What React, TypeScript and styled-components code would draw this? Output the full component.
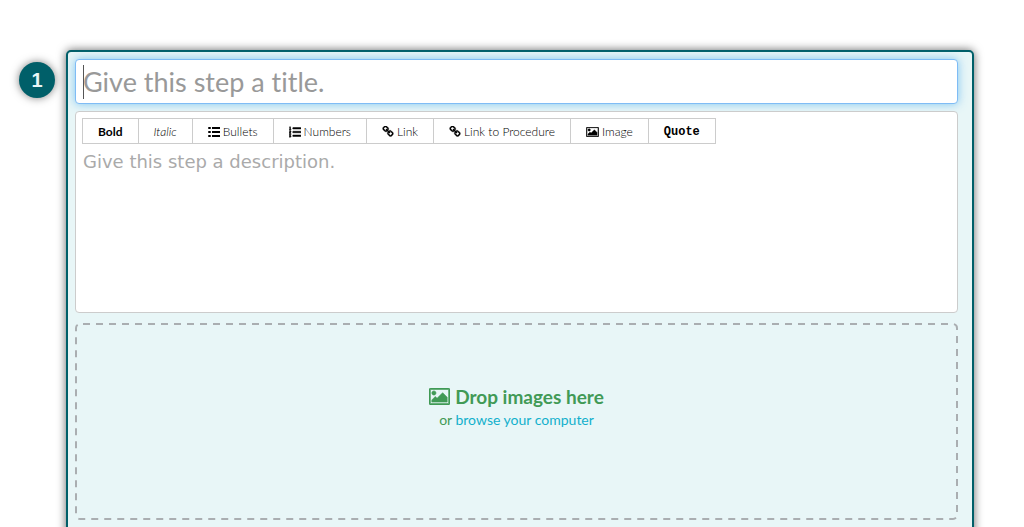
import React from "react";
import styled, { createGlobalStyle } from "styled-components";
import { FaListOl } from "react-icons/fa";

const GlobalStyle = createGlobalStyle`
  *, *::before, *::after { box-sizing: border-box; }
  body {
    margin: 0;
    background: #fff;
    font-family: Lato, "Liberation Sans", sans-serif;
    font-variant-ligatures: none;
  }
`;

const Page = styled.main`
  display: flex;
  align-items: flex-start;
  height: 100vh;
  padding: 50px 50px 0 19px;
  overflow: hidden;
`;

const StepNumber = styled.div`
  flex: none;
  display: flex;
  align-items: center;
  justify-content: center;
  width: 36px;
  height: 36px;
  margin: 12px 11px 0 0;
  border-radius: 50%;
  background: #005f69;
  box-shadow: 0 0 8px rgba(0, 0, 0, 0.5);
  color: #e8f6f7;
  font: bold 20px/36px "Liberation Sans", sans-serif;
`;

const StepPanel = styled.form`
  flex: 1;
  min-width: 0;
  display: flex;
  flex-direction: column;
  padding: 7px 14px 40px 7px;
  border: 2px solid #005f69;
  border-radius: 5px;
  background: #e8f6f7;
  box-shadow: 0 0 10px rgba(0, 0, 0, 0.6);
`;

const TitleInput = styled.input`
  width: 100%;
  height: 45px;
  padding: 0 7px;
  border: 1px solid #7fbcf5;
  border-radius: 4px;
  outline: none;
  background: #fff;
  box-shadow: 0 0 10px rgba(102, 185, 240, 0.8);
  color: #333;
  caret-color: #333;
  font: 27px/34px Lato, sans-serif;
  font-variant-ligatures: none;
  &::placeholder { color: #999; opacity: 1; }
  &:placeholder-shown:focus {
    caret-color: transparent;
    background: linear-gradient(#555, #555) 7px 5px / 1px 34px no-repeat, #fff;
  }
`;

const Editor = styled.section`
  display: flex;
  flex-direction: column;
  margin-top: 7px;
  padding: 6px;
  border: 1px solid #ccc;
  border-radius: 4px;
  background: #fff;
`;

const Toolbar = styled.div`
  display: flex;
`;

const ToolButton = styled.button<{ $variant?: "bold" | "italic" | "quote" }>`
  display: flex;
  align-items: center;
  gap: 3px;
  height: 26px;
  padding: 1px 15px 0;
  border: 1px solid #ccc;
  background: #fff;
  color: #000;
  font-family: ${(p) => (p.$variant === "quote" ? '"Liberation Mono", monospace' : "Lato, sans-serif")};
  font-size: 12px;
  font-weight: ${(p) => (p.$variant === "bold" || p.$variant === "quote" ? 700 : 300)};
  font-style: ${(p) => (p.$variant === "italic" ? "italic" : "normal")};
  white-space: nowrap;
  & + & { margin-left: -1px; }
`;

const Description = styled.textarea`
  height: 162px;
  padding: 6px 1px;
  border: 0;
  outline: none;
  resize: none;
  background: transparent;
  color: #333;
  font: 18px/24px "DejaVu Sans", sans-serif;
  &::placeholder { color: #aaa; opacity: 1; }
`;

const DropZone = styled.section`
  position: relative;
  display: flex;
  flex-direction: column;
  align-items: center;
  justify-content: center;
  min-height: 197px;
  margin-top: 10px;
  padding-bottom: 28px;
  color: #419a56;
`;

const DashedOutline = styled.svg`
  position: absolute;
  inset: 0;
  width: 100%;
  height: 100%;
  pointer-events: none;
  rect {
    x: 1px;
    y: 1px;
    width: calc(100% - 2px);
    height: calc(100% - 2px);
    fill: none;
    stroke: #aaaeb1;
    stroke-width: 2px;
    stroke-dasharray: 7 6;
    stroke-dashoffset: -3;
  }
`;

const DropTitle = styled.h2`
  display: flex;
  align-items: center;
  gap: 5px;
  margin: 0;
  font-size: 19px;
  line-height: 24px;
`;

const DropHint = styled.p`
  margin: 0;
  font-size: 14px;
  line-height: 22px;
`;

const BrowseLink = styled.a`
  color: #12b0cc;
  text-decoration: none;
`;

const Glyph = styled.svg<{ $heavy?: boolean }>`
  flex: none;
  fill: currentColor;
  stroke: ${(p) => (p.$heavy ? "currentColor" : "none")};
  stroke-width: 50;
`;

function PictureIcon({ width, height }: { width: number; height: number }) {
  return (
    <Glyph $heavy width={width} height={height} viewBox="64 128 1920 1536" aria-hidden="true">
      <path d="M704 576q0 80-56 136t-136 56-136-56-56-136 56-136 136-56 136 56 56 136zm1024 384v448H320v-192l320-320 160 160 512-512zm96-704H224q-13 0-22.5 9.5T192 288v1216q0 13 9.5 22.5t22.5 9.5h1600q13 0 22.5-9.5t9.5-22.5V288q0-13-9.5-22.5T1824 256zm160 32v1216q0 66-47 113t-113 47H224q-66 0-113-47T64 1504V288q0-66 47-113t113-47h1600q66 0 113 47t47 113z" />
    </Glyph>
  );
}

function BulletsIcon() {
  return (
    <Glyph width="12" height="12" viewBox="0 0 12 12" aria-hidden="true">
      {[2, 6, 10].map((y) => (
        <g key={y}>
          <rect x="0" y={y - 1} width="3" height="2" rx="1" />
          <rect x="4" y={y - 1} width="8" height="2" />
        </g>
      ))}
    </Glyph>
  );
}

function ChainIcon() {
  return (
    <Glyph $heavy width="12" height="11" viewBox="64 64 1664 1664" aria-hidden="true">
      <path d="M1520 1216q0-40-28-68l-208-208q-28-28-68-28-42 0-72 32 3 3 19 18.5t21.5 21.5 15 19 13 25.5 3.5 27.5q0 40-28 68t-68 28q-15 0-27.5-3.5t-25.5-13-19-15-21.5-21.5-18.5-19q-33 31-33 73 0 40 28 68l206 207q27 27 68 27 40 0 68-26l147-146q28-28 28-67zm-703-705q0-40-28-68l-206-207q-28-28-68-28-39 0-68 27l-147 146q-28 28-28 67 0 40 28 68l208 208q27 27 68 27 42 0 72-31-3-3-19-18.5t-21.5-21.5-15-19-13-25.5-3.5-27.5q0-40 28-68t68-28q15 0 27.5 3.5t25.5 13 19 15 21.5 21.5 18.5 19q33-31 33-73zm895 705q0 120-85 203l-147 146q-83 83-203 83-121 0-204-85l-206-207q-83-83-83-203 0-123 88-209l-88-88q-86 88-208 88-120 0-204-84l-208-208q-84-84-84-204t85-203l147-146q83-83 203-83 121 0 204 85l206 207q83 83 83 203 0 123-88 209l88 88q86-88 208-88 120 0 204 84l208 208q84 84 84 204z" />
    </Glyph>
  );
}

export default function App() {
  return (
    <>
      <GlobalStyle />
      <Page>
        <StepNumber>1</StepNumber>
        <StepPanel>
          <TitleInput type="text" aria-label="Step title" placeholder="Give this step a title." autoFocus />
          <Editor>
            <Toolbar role="toolbar" aria-label="Formatting">
              <ToolButton type="button" $variant="bold">Bold</ToolButton>
              <ToolButton type="button" $variant="italic">Italic</ToolButton>
              <ToolButton type="button"><BulletsIcon />Bullets</ToolButton>
              <ToolButton type="button"><FaListOl size={12} stroke="currentColor" strokeWidth={20} aria-hidden="true" />Numbers</ToolButton>
              <ToolButton type="button"><ChainIcon />Link</ToolButton>
              <ToolButton type="button"><ChainIcon />Link to Procedure</ToolButton>
              <ToolButton type="button"><PictureIcon width={13} height={10} />Image</ToolButton>
              <ToolButton type="button" $variant="quote">Quote</ToolButton>
            </Toolbar>
            <Description aria-label="Step description" placeholder="Give this step a description." />
          </Editor>
          <DropZone>
            <DashedOutline aria-hidden="true"><rect rx="4" /></DashedOutline>
            <DropTitle><PictureIcon width={21} height={17} />Drop images here</DropTitle>
            <DropHint>or <BrowseLink href="#browse">browse your computer</BrowseLink></DropHint>
          </DropZone>
        </StepPanel>
      </Page>
    </>
  );
}
